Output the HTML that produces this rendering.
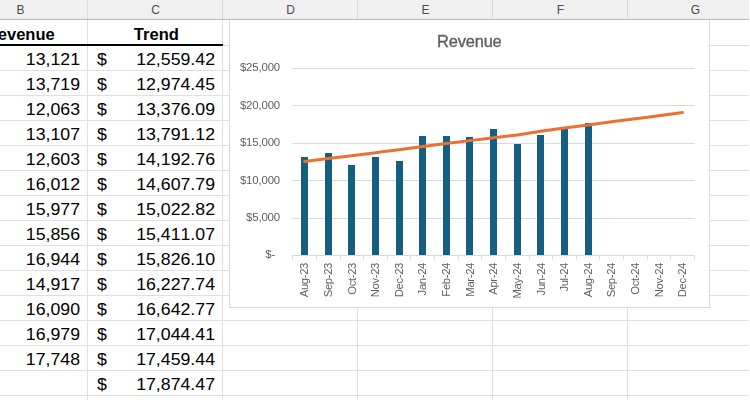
<!DOCTYPE html>
<html lang="en"><head><meta charset="utf-8"><title>Revenue trend</title>
<style>
html,body{margin:0;padding:0;background:#fff;}
body{width:750px;height:400px;overflow:hidden;position:relative;font-family:"Liberation Sans",sans-serif;}
#sheet{position:absolute;left:0;top:0;width:750px;height:400px;overflow:hidden;background:#fff;}
.hl,.vl{position:absolute;background:#e0e0e0;}
.hl{height:1px;left:0;width:749px;}
.vl{width:1px;top:20px;height:380px;}
#colhdr{z-index:5;position:absolute;left:0;top:0;width:749px;height:19px;background:#f0f0f0;border-bottom:1px solid #b9b9b9;}
#colhdr span{position:absolute;top:1px;height:19px;line-height:19px;width:135px;text-align:center;font-size:12px;color:#4c4c4c;}
#colhdr i{position:absolute;top:0;width:1px;height:19px;background:#dadada;}
.cell{font-kerning:none;position:absolute;height:25px;line-height:25px;font-size:15.9px;color:#000;white-space:nowrap;}
.num{text-align:right;transform:scaleX(1.115);transform-origin:100% 50%;}
.cur{text-align:left;transform:scaleX(1.115);transform-origin:0 50%;}
.hd{font-kerning:normal;font-weight:bold;text-align:center;transform:scaleX(1.04);}
#thick{position:absolute;left:0;top:44px;width:223px;height:2px;background:#000;}
#chart{position:absolute;left:229px;top:19px;width:479px;height:287px;background:#fff;border:1px solid #d9d9d9;box-sizing:content-box;}
</style></head><body><div id="sheet">

<div class="hl" style="top:45px"></div>
<div class="hl" style="top:70px"></div>
<div class="hl" style="top:95px"></div>
<div class="hl" style="top:120px"></div>
<div class="hl" style="top:145px"></div>
<div class="hl" style="top:170px"></div>
<div class="hl" style="top:195px"></div>
<div class="hl" style="top:220px"></div>
<div class="hl" style="top:245px"></div>
<div class="hl" style="top:270px"></div>
<div class="hl" style="top:295px"></div>
<div class="hl" style="top:320px"></div>
<div class="hl" style="top:345px"></div>
<div class="hl" style="top:370px"></div>
<div class="hl" style="top:395px"></div>
<div class="vl" style="left:87px"></div>
<div class="vl" style="left:222px"></div>
<div class="vl" style="left:357px"></div>
<div class="vl" style="left:492px"></div>
<div class="vl" style="left:627px"></div>
<div id="colhdr">
<span style="left:-47px">B</span>
<span style="left:88px">C</span>
<span style="left:223px">D</span>
<span style="left:358px">E</span>
<span style="left:493px">F</span>
<span style="left:628px">G</span>
<i style="left:87px"></i>
<i style="left:222px"></i>
<i style="left:357px"></i>
<i style="left:492px"></i>
<i style="left:627px"></i>
</div>
<div class="cell hd" style="left:-48px;width:135px;top:22px;transform-origin:48px 50%">Revenue</div>
<div class="cell hd" style="left:88px;width:135px;top:22px;transform-origin:46px 50%">Trend</div>
<div id="thick"></div>
<div class="cell num" style="left:-20px;width:100px;top:47px">13,121</div>
<div class="cell cur" style="left:97px;top:47px">$</div>
<div class="cell num" style="left:110px;width:105px;top:47px">12,559.42</div>
<div class="cell num" style="left:-20px;width:100px;top:72px">13,719</div>
<div class="cell cur" style="left:97px;top:72px">$</div>
<div class="cell num" style="left:110px;width:105px;top:72px">12,974.45</div>
<div class="cell num" style="left:-20px;width:100px;top:97px">12,063</div>
<div class="cell cur" style="left:97px;top:97px">$</div>
<div class="cell num" style="left:110px;width:105px;top:97px">13,376.09</div>
<div class="cell num" style="left:-20px;width:100px;top:122px">13,107</div>
<div class="cell cur" style="left:97px;top:122px">$</div>
<div class="cell num" style="left:110px;width:105px;top:122px">13,791.12</div>
<div class="cell num" style="left:-20px;width:100px;top:147px">12,603</div>
<div class="cell cur" style="left:97px;top:147px">$</div>
<div class="cell num" style="left:110px;width:105px;top:147px">14,192.76</div>
<div class="cell num" style="left:-20px;width:100px;top:172px">16,012</div>
<div class="cell cur" style="left:97px;top:172px">$</div>
<div class="cell num" style="left:110px;width:105px;top:172px">14,607.79</div>
<div class="cell num" style="left:-20px;width:100px;top:197px">15,977</div>
<div class="cell cur" style="left:97px;top:197px">$</div>
<div class="cell num" style="left:110px;width:105px;top:197px">15,022.82</div>
<div class="cell num" style="left:-20px;width:100px;top:222px">15,856</div>
<div class="cell cur" style="left:97px;top:222px">$</div>
<div class="cell num" style="left:110px;width:105px;top:222px">15,411.07</div>
<div class="cell num" style="left:-20px;width:100px;top:247px">16,944</div>
<div class="cell cur" style="left:97px;top:247px">$</div>
<div class="cell num" style="left:110px;width:105px;top:247px">15,826.10</div>
<div class="cell num" style="left:-20px;width:100px;top:272px">14,917</div>
<div class="cell cur" style="left:97px;top:272px">$</div>
<div class="cell num" style="left:110px;width:105px;top:272px">16,227.74</div>
<div class="cell num" style="left:-20px;width:100px;top:297px">16,090</div>
<div class="cell cur" style="left:97px;top:297px">$</div>
<div class="cell num" style="left:110px;width:105px;top:297px">16,642.77</div>
<div class="cell num" style="left:-20px;width:100px;top:322px">16,979</div>
<div class="cell cur" style="left:97px;top:322px">$</div>
<div class="cell num" style="left:110px;width:105px;top:322px">17,044.41</div>
<div class="cell num" style="left:-20px;width:100px;top:347px">17,748</div>
<div class="cell cur" style="left:97px;top:347px">$</div>
<div class="cell num" style="left:110px;width:105px;top:347px">17,459.44</div>
<div class="cell cur" style="left:97px;top:372px">$</div>
<div class="cell num" style="left:110px;width:105px;top:372px">17,874.47</div>
<div id="chart"></div>
<svg width="750" height="400" viewBox="0 0 750 400" style="position:absolute;left:0;top:0;will-change:transform" font-family="Liberation Sans, sans-serif">
<line x1="292.5" y1="255.5" x2="694.5" y2="255.5" stroke="#d9d9d9" stroke-width="1"/>
<text x="275.2" y="258.3" text-anchor="end" font-size="11.4" letter-spacing="-0.15" fill="#5f5f5f">$-</text>
<line x1="292.5" y1="218.5" x2="694.5" y2="218.5" stroke="#d9d9d9" stroke-width="1"/>
<text x="280.0" y="220.8" text-anchor="end" font-size="11.4" letter-spacing="-0.15" fill="#5f5f5f">$5,000</text>
<line x1="292.5" y1="180.5" x2="694.5" y2="180.5" stroke="#d9d9d9" stroke-width="1"/>
<text x="280.0" y="184.0" text-anchor="end" font-size="11.4" letter-spacing="-0.15" fill="#5f5f5f">$10,000</text>
<line x1="292.5" y1="143.5" x2="694.5" y2="143.5" stroke="#d9d9d9" stroke-width="1"/>
<text x="280.0" y="145.8" text-anchor="end" font-size="11.4" letter-spacing="-0.15" fill="#5f5f5f">$15,000</text>
<line x1="292.5" y1="105.5" x2="694.5" y2="105.5" stroke="#d9d9d9" stroke-width="1"/>
<text x="280.0" y="109.0" text-anchor="end" font-size="11.4" letter-spacing="-0.15" fill="#5f5f5f">$20,000</text>
<line x1="292.5" y1="68.5" x2="694.5" y2="68.5" stroke="#d9d9d9" stroke-width="1"/>
<text x="280.0" y="70.5" text-anchor="end" font-size="11.4" letter-spacing="-0.15" fill="#5f5f5f">$25,000</text>
<line x1="292.5" y1="255" x2="292.5" y2="259.5" stroke="#d9d9d9" stroke-width="1"/>
<line x1="316.5" y1="255" x2="316.5" y2="259.5" stroke="#d9d9d9" stroke-width="1"/>
<line x1="340.5" y1="255" x2="340.5" y2="259.5" stroke="#d9d9d9" stroke-width="1"/>
<line x1="363.5" y1="255" x2="363.5" y2="259.5" stroke="#d9d9d9" stroke-width="1"/>
<line x1="387.5" y1="255" x2="387.5" y2="259.5" stroke="#d9d9d9" stroke-width="1"/>
<line x1="410.5" y1="255" x2="410.5" y2="259.5" stroke="#d9d9d9" stroke-width="1"/>
<line x1="434.5" y1="255" x2="434.5" y2="259.5" stroke="#d9d9d9" stroke-width="1"/>
<line x1="458.5" y1="255" x2="458.5" y2="259.5" stroke="#d9d9d9" stroke-width="1"/>
<line x1="481.5" y1="255" x2="481.5" y2="259.5" stroke="#d9d9d9" stroke-width="1"/>
<line x1="505.5" y1="255" x2="505.5" y2="259.5" stroke="#d9d9d9" stroke-width="1"/>
<line x1="529.5" y1="255" x2="529.5" y2="259.5" stroke="#d9d9d9" stroke-width="1"/>
<line x1="552.5" y1="255" x2="552.5" y2="259.5" stroke="#d9d9d9" stroke-width="1"/>
<line x1="576.5" y1="255" x2="576.5" y2="259.5" stroke="#d9d9d9" stroke-width="1"/>
<line x1="599.5" y1="255" x2="599.5" y2="259.5" stroke="#d9d9d9" stroke-width="1"/>
<line x1="623.5" y1="255" x2="623.5" y2="259.5" stroke="#d9d9d9" stroke-width="1"/>
<line x1="647.5" y1="255" x2="647.5" y2="259.5" stroke="#d9d9d9" stroke-width="1"/>
<line x1="670.5" y1="255" x2="670.5" y2="259.5" stroke="#d9d9d9" stroke-width="1"/>
<line x1="694.5" y1="255" x2="694.5" y2="259.5" stroke="#d9d9d9" stroke-width="1"/>
<rect x="301" y="157" width="7" height="98" fill="#156082"/>
<rect x="325" y="153" width="7" height="102" fill="#156082"/>
<rect x="348" y="165" width="7" height="90" fill="#156082"/>
<rect x="372" y="157" width="7" height="98" fill="#156082"/>
<rect x="396" y="161" width="7" height="94" fill="#156082"/>
<rect x="419" y="136" width="7" height="119" fill="#156082"/>
<rect x="443" y="136" width="7" height="119" fill="#156082"/>
<rect x="466" y="137" width="7" height="118" fill="#156082"/>
<rect x="490" y="129" width="7" height="126" fill="#156082"/>
<rect x="514" y="144" width="7" height="111" fill="#156082"/>
<rect x="537" y="135" width="7" height="120" fill="#156082"/>
<rect x="561" y="128" width="7" height="127" fill="#156082"/>
<rect x="585" y="123" width="7" height="132" fill="#156082"/>
<polyline points="304.51,161.56 328.13,158.55 351.75,155.65 375.37,152.64 398.99,149.64 422.61,146.53 446.23,143.53 469.85,140.63 493.47,137.72 517.09,134.92 540.71,131.21 564.33,128.11 587.95,124.90 611.57,121.80 635.19,118.79 658.81,115.69 682.43,112.59" fill="none" stroke="#e97132" stroke-width="3" stroke-linecap="round" stroke-linejoin="round"/>
<text transform="translate(308.36,263) rotate(-90)" text-anchor="end" font-size="11.3" letter-spacing="-0.36" fill="#5f5f5f">Aug-23</text>
<text transform="translate(331.98,263) rotate(-90)" text-anchor="end" font-size="11.3" letter-spacing="-0.36" fill="#5f5f5f">Sep-23</text>
<text transform="translate(355.60,263) rotate(-90)" text-anchor="end" font-size="11.3" letter-spacing="-0.36" fill="#5f5f5f">Oct-23</text>
<text transform="translate(379.22,263) rotate(-90)" text-anchor="end" font-size="11.3" letter-spacing="-0.36" fill="#5f5f5f">Nov-23</text>
<text transform="translate(402.84,263) rotate(-90)" text-anchor="end" font-size="11.3" letter-spacing="-0.36" fill="#5f5f5f">Dec-23</text>
<text transform="translate(426.46,263) rotate(-90)" text-anchor="end" font-size="11.3" letter-spacing="-0.36" fill="#5f5f5f">Jan-24</text>
<text transform="translate(450.08,263) rotate(-90)" text-anchor="end" font-size="11.3" letter-spacing="-0.36" fill="#5f5f5f">Feb-24</text>
<text transform="translate(473.70,263) rotate(-90)" text-anchor="end" font-size="11.3" letter-spacing="-0.36" fill="#5f5f5f">Mar-24</text>
<text transform="translate(497.32,263) rotate(-90)" text-anchor="end" font-size="11.3" letter-spacing="-0.36" fill="#5f5f5f">Apr-24</text>
<text transform="translate(520.94,263) rotate(-90)" text-anchor="end" font-size="11.3" letter-spacing="-0.36" fill="#5f5f5f">May-24</text>
<text transform="translate(544.56,263) rotate(-90)" text-anchor="end" font-size="11.3" letter-spacing="-0.36" fill="#5f5f5f">Jun-24</text>
<text transform="translate(568.18,263) rotate(-90)" text-anchor="end" font-size="11.3" letter-spacing="-0.36" fill="#5f5f5f">Jul-24</text>
<text transform="translate(591.80,263) rotate(-90)" text-anchor="end" font-size="11.3" letter-spacing="-0.36" fill="#5f5f5f">Aug-24</text>
<text transform="translate(615.42,263) rotate(-90)" text-anchor="end" font-size="11.3" letter-spacing="-0.36" fill="#5f5f5f">Sep-24</text>
<text transform="translate(639.04,263) rotate(-90)" text-anchor="end" font-size="11.3" letter-spacing="-0.36" fill="#5f5f5f">Oct-24</text>
<text transform="translate(662.66,263) rotate(-90)" text-anchor="end" font-size="11.3" letter-spacing="-0.36" fill="#5f5f5f">Nov-24</text>
<text transform="translate(686.28,263) rotate(-90)" text-anchor="end" font-size="11.3" letter-spacing="-0.36" fill="#5f5f5f">Dec-24</text>
<text x="469.3" y="47" text-anchor="middle" font-size="16.5" letter-spacing="-0.22" fill="#5f5f5f" stroke="#5f5f5f" stroke-width="0.35">Revenue</text>
</svg>
</div></body></html>
